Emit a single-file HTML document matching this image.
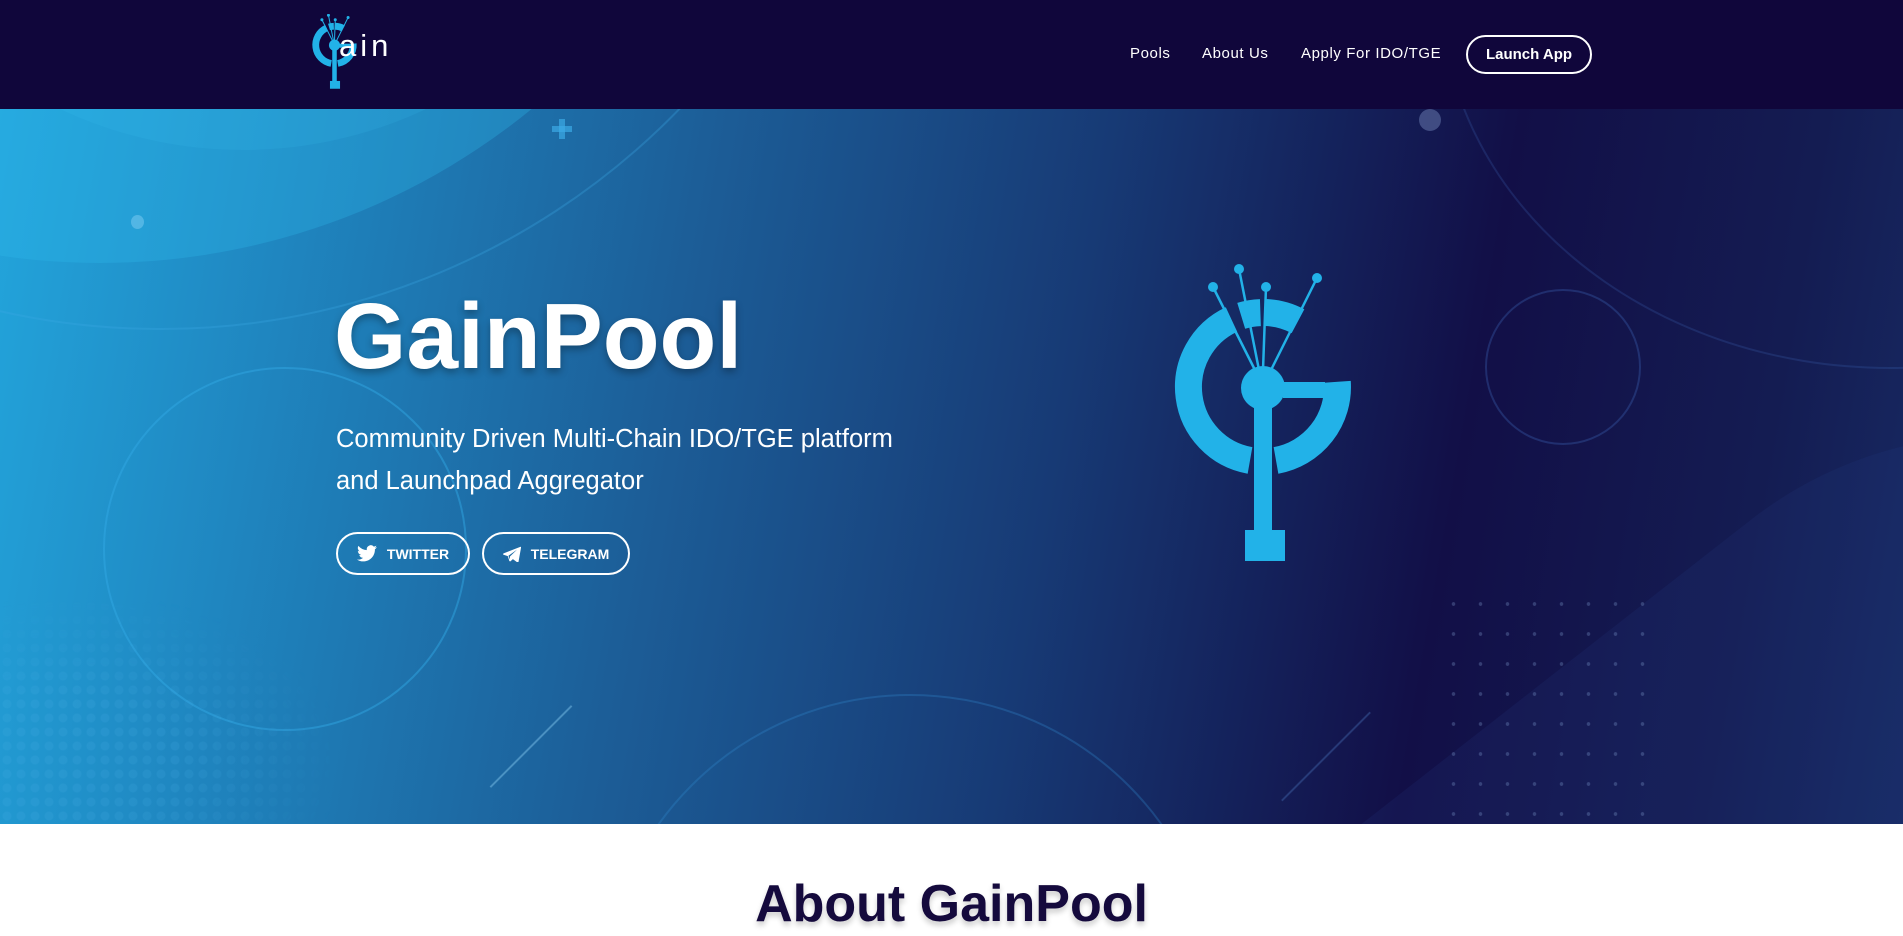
<!DOCTYPE html>
<html><head><meta charset="utf-8">
<style>
*{margin:0;padding:0;box-sizing:border-box}
body{width:1903px;height:936px;overflow:hidden;background:#fff;font-family:"Liberation Sans",sans-serif;position:relative}
.nav{position:absolute;left:0;top:0;width:1903px;height:109px;background:#10063b;z-index:2}
.nav a{position:absolute;top:45px;color:#fff;font-size:15px;letter-spacing:0.6px;text-decoration:none}
.btn{position:absolute;border:2px solid #fff;border-radius:22px;color:#fff;font-weight:bold;display:flex;align-items:center;justify-content:center}
.hero{position:absolute;left:0;top:109px;width:1903px;height:715px;overflow:hidden;
background:linear-gradient(100deg,#23a5dc 0%,#1f86c0 15%,#1c5e98 35%,#173a75 55%,#120f47 75%,#141c52 90%,#172a63 100%)}
.hero .o{position:absolute;border-radius:50%}
h1{position:absolute;left:334px;top:174px;color:#fff;font-size:93px;font-weight:bold;text-shadow:0 4px 8px rgba(0,0,0,0.3)}
.sub{position:absolute;left:336px;top:309px;color:#fff;font-size:25.5px;line-height:42px}
h2{position:absolute;left:0;width:1903px;text-align:center;top:874px;font-size:52px;font-weight:bold;color:#150a3d;text-shadow:0 4px 6px rgba(0,0,0,0.2)}
</style></head><body>
<div class="nav">
<svg style="position:absolute;left:311px;top:14px" width="47" height="75" viewBox="1170 264 186 298">
<g fill="none" stroke="#22b2e8" stroke-width="27">
<path d="M1250,460.4 A74.5,74.5 0 0 1 1231.5,319.5"/>
<path d="M1241.2,315.8 A74.5,74.5 0 0 1 1260.4,312.6"/>
<path d="M1265.6,312.5 A74.5,74.5 0 0 1 1298,321.2"/>
<path d="M1337.3,381.8 A74.5,74.5 0 0 1 1276,460.4"/>
</g>
<g fill="#22b2e8"><rect x="1283" y="382" width="42" height="16"/><rect x="1254" y="380" width="18" height="152"/><rect x="1245" y="530" width="40" height="31"/><circle cx="1263" cy="388" r="22"/>
<circle cx="1213" cy="287" r="6"/><circle cx="1239" cy="269" r="6"/><circle cx="1266" cy="287" r="6"/><circle cx="1317" cy="278" r="6"/></g>
<g stroke="#22b2e8" stroke-width="4"><line x1="1256" y1="372" x2="1213" y2="287"/><line x1="1259" y1="370" x2="1239" y2="269"/><line x1="1263" y1="370" x2="1266" y2="287"/><line x1="1270" y1="372" x2="1317" y2="278"/></g>
</svg>
<div style="position:absolute;left:339px;top:30px;color:#fff;font-size:31px;letter-spacing:4px;line-height:32px">ain</div>
<a style="left:1130px">Pools</a>
<a style="left:1202px">About Us</a>
<a style="left:1301px">Apply For IDO/TGE</a>
<div class="btn" style="left:1466px;top:35px;width:126px;height:39px;font-size:15px">Launch App</div>
</div>
<div class="hero">
<div class="o" style="left:-582px;top:-1210px;width:1364px;height:1364px;background:rgba(45,185,235,0.3)"></div>
<div class="o" style="left:-186px;top:-817px;width:858px;height:858px;background:rgba(60,195,240,0.15)"></div>
<div class="o" style="left:-564px;top:-1227px;width:1448px;height:1448px;border:2px solid rgba(60,170,230,0.3)"></div>
<div class="o" style="left:103px;top:258px;width:364px;height:364px;border:2px solid rgba(50,170,230,0.45)"></div>
<div class="o" style="left:1485px;top:180px;width:156px;height:156px;border:2px solid rgba(60,100,180,0.35)"></div>
<div class="o" style="left:600px;top:585px;width:620px;height:620px;border:2px solid rgba(50,140,210,0.3)"></div>
<div class="o" style="left:1440px;top:-500px;width:900px;height:760px;border:2px solid rgba(60,100,180,0.25)"></div>
<div class="o" style="left:131px;top:106px;width:13px;height:14px;background:rgba(120,200,240,0.55)"></div>
<div class="o" style="left:1419px;top:0px;width:22px;height:22px;background:rgba(120,140,190,0.45)"></div>
<div style="position:absolute;left:1150px;top:480px;width:1300px;height:800px;transform:rotate(-38deg);background:rgba(40,70,140,0.15);border-radius:400px"></div>
<div style="position:absolute;left:1440px;top:480px;width:220px;height:240px;background-image:radial-gradient(rgba(130,160,210,0.3) 1.5px,transparent 2px);background-size:27px 30px"></div>
<div style="position:absolute;left:0px;top:490px;width:330px;height:230px;background-image:radial-gradient(rgba(80,180,235,0.15) 4px,transparent 5px);background-size:14px 14px;-webkit-mask-image:radial-gradient(ellipse at 20% 70%,#000 30%,transparent 75%);mask-image:radial-gradient(ellipse at 20% 70%,#000 30%,transparent 75%)"></div>
<div style="position:absolute;left:559px;top:10px;width:6px;height:20px;background:rgba(60,170,230,0.7)"></div>
<div style="position:absolute;left:552px;top:17px;width:20px;height:6px;background:rgba(60,170,230,0.7)"></div>
<div style="position:absolute;left:530px;top:580px;width:2px;height:115px;background:rgba(120,190,230,0.5);transform:rotate(45deg)"></div>
<div style="position:absolute;left:1325px;top:585px;width:2px;height:125px;background:rgba(70,110,180,0.4);transform:rotate(45deg)"></div>
<h1>GainPool</h1>
<div class="sub">Community Driven Multi-Chain IDO/TGE platform<br>and Launchpad Aggregator</div>
<div class="btn" style="left:336px;top:423px;width:134px;height:43px;font-size:14px">
<svg width="20" height="17" viewBox="0 0 24 20" style="margin-right:10px"><path fill="#fff" d="M24 2.4a10 10 0 0 1-2.8.8A5 5 0 0 0 23.3.5a10 10 0 0 1-3.1 1.2A4.9 4.9 0 0 0 11.8 6 14 14 0 0 1 1.7.9a4.9 4.9 0 0 0 1.5 6.6A4.9 4.9 0 0 1 1 6.9a4.9 4.9 0 0 0 3.9 4.8 5 5 0 0 1-2.2.1 4.9 4.9 0 0 0 4.6 3.4A9.9 9.9 0 0 1 0 17.3 14 14 0 0 0 7.5 19.5c9 0 14-7.5 14-14v-.6A10 10 0 0 0 24 2.4z"/></svg>TWITTER</div>
<div class="btn" style="left:482px;top:423px;width:148px;height:43px;font-size:14px">
<svg width="18" height="16" viewBox="0 0 24 20" style="margin-right:10px"><path fill="#fff" d="M23 0.5 0.8 9.1c-1 .4-1 1.6 0 1.9l5.6 1.8 2 6.3c.3.8 1.2 1 1.8.4l3-2.7 5.7 4.2c.7.5 1.6.1 1.8-.7L24 1.6C24.2.7 23.7.2 23 .5zM9.3 13.4l-.4 4-1.6-5 11.4-8.2z"/></svg>TELEGRAM</div>
<svg style="position:absolute;left:0;top:-109px" width="1903" height="824" viewBox="0 0 1903 824">
<g fill="none" stroke="#22b2e8" stroke-width="27">
<path d="M1250,460.4 A74.5,74.5 0 0 1 1231.5,319.5"/>
<path d="M1241.2,315.8 A74.5,74.5 0 0 1 1260.4,312.6"/>
<path d="M1265.6,312.5 A74.5,74.5 0 0 1 1298,321.2"/>
<path d="M1337.3,381.8 A74.5,74.5 0 0 1 1276,460.4"/>
</g>
<g fill="#22b2e8"><rect x="1283" y="382" width="42" height="16"/><rect x="1254" y="380" width="18" height="152"/><rect x="1245" y="530" width="40" height="31"/><circle cx="1263" cy="388" r="22"/>
<circle cx="1213" cy="287" r="5"/><circle cx="1239" cy="269" r="5"/><circle cx="1266" cy="287" r="5"/><circle cx="1317" cy="278" r="5"/></g>
<g stroke="#22b2e8" stroke-width="2.5"><line x1="1256" y1="372" x2="1213" y2="287"/><line x1="1259" y1="370" x2="1239" y2="269"/><line x1="1263" y1="370" x2="1266" y2="287"/><line x1="1270" y1="372" x2="1317" y2="278"/></g>
</svg>
</div>
<h2>About GainPool</h2>
</body></html>
